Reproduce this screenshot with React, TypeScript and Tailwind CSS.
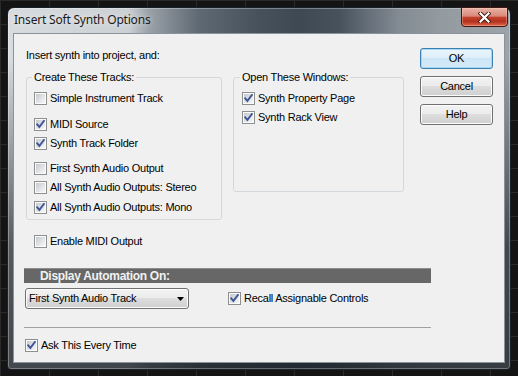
import React from "react";

function Check({ checked }: { checked?: boolean }) {
  return (
    <svg width="13" height="13" viewBox="0 0 13 13" className="block shrink-0">
      <defs>
        <linearGradient id="cbg" x1="0" y1="0" x2="1" y2="1">
          <stop offset="0" stopColor="#c6cacf" />
          <stop offset="1" stopColor="#f7f7f7" />
        </linearGradient>
      </defs>
      <rect x="0.5" y="0.5" width="12" height="12" fill="#fbfbfb" stroke="#8e8f8f" />
      <rect x="2" y="2" width="9" height="9" fill="url(#cbg)" />
      {checked && (
        <path d="M3.2 6.3 L5.4 8.9 L9.9 3" fill="none" stroke="#3f5597" strokeWidth="1.9" strokeLinecap="square" />
      )}
    </svg>
  );
}

function Row({ checked, label, className }: { checked?: boolean; label: string; className?: string }) {
  return (
    <div className={"flex h-[13px] items-center gap-[3px] " + (className ?? "")}>
      <Check checked={checked} />
      <span className="whitespace-nowrap">{label}</span>
    </div>
  );
}

function Btn({ label, primary }: { label: string; primary?: boolean }) {
  return (
    <div
      className={
        primary
          ? "flex h-[21px] w-[73px] items-center justify-center rounded-[3px] border border-[#3c7fb1] bg-[linear-gradient(to_bottom,#ecf6fc_0%,#dcedf8_50%,#cde6f6_50%,#d3eaf8_100%)] shadow-[inset_0_0_0_1px_#a6d7f3]"
          : "flex h-[21px] w-[73px] items-center justify-center rounded-[3px] border border-[#707070] bg-[linear-gradient(to_bottom,#f2f2f2_0%,#ebebeb_50%,#dddddd_50%,#cfcfcf_100%)] shadow-[inset_0_0_0_1px_#fcfcfc]"
      }
    >
      {label}
    </div>
  );
}

export default function App() {
  return (
    <div className="h-[376px] w-[518px] overflow-hidden bg-[#141414] bg-[linear-gradient(#2a2a2a_1px,transparent_1px),linear-gradient(90deg,#2a2a2a_1px,transparent_1px)] bg-[size:49px_24px] pl-[7px] pt-[7px] font-['Liberation_Sans',Arial,sans-serif] text-[11px] leading-[13px] tracking-[-0.25px] text-black">
      <div className="flex h-[363px] w-[504px] flex-col rounded-t-[7px] rounded-b-[4px] border border-[#1a2128] bg-[linear-gradient(to_bottom,rgba(28,34,40,0)_0px,rgba(28,34,40,0)_50px,rgba(28,34,40,0.7)_240px,rgba(28,34,40,0.8)_100%),linear-gradient(to_right,#d8dcdf_0%,#cbd0d4_24%,#9aa2a9_28%,#5f6973_38%,#46515c_50%,#3e4954_58%,#47525d_66%,#66707a_72%,#838b93_78%,#939ba1_86%,#9ca3a9_100%)] shadow-[inset_0_0_0_1px_rgba(255,255,255,0.3)]">
        {/* title bar */}
        <div className="flex h-[25px] items-start justify-between pl-[6px]">
          <span className="pt-[4px] font-['Noto_Sans',sans-serif] text-[12px] leading-[16px] tracking-[-0.2px] text-[#1b1b1b] [text-shadow:0_0_6px_rgba(255,255,255,0.8)]">
            Insert Soft Synth Options
          </span>
          <div className="mr-[2px] mt-[-1px] flex h-[20px] w-[47px] items-center justify-center rounded-b-[4px] border border-[#3d1710] bg-[linear-gradient(to_bottom,#e9b3a8_0%,#d98878_45%,#c2402c_52%,#b5311f_75%,#e0674b_100%)] shadow-[inset_0_0_0_1px_rgba(255,215,200,0.35)]">
            <svg width="13" height="11" viewBox="0 0 13 11">
              <path d="M2.5 1.5 L10.5 9.5 M10.5 1.5 L2.5 9.5" stroke="#3b1a14" strokeWidth="4" strokeLinecap="square" fill="none" />
              <path d="M2.5 1.5 L10.5 9.5 M10.5 1.5 L2.5 9.5" stroke="#ffffff" strokeWidth="2.2" strokeLinecap="square" fill="none" />
            </svg>
          </div>
        </div>

        {/* client area */}
        <div className="mx-[5px] flex h-[330px] flex-col border border-[#8a939b] bg-[#f0f0f0] pl-[10px] pt-[14px]">
          <div className="flex items-start">
            <div className="flex-1 pt-[1px]">
              <div className="ml-[2px] h-[13px] whitespace-nowrap">Insert synth into project, and:</div>
              <div className="ml-[2px] mt-[9px] flex items-start gap-[11px]">
                <fieldset className="w-[196px] rounded-[3px] border border-[#d3d8dc] px-[5px] pb-[5px] pt-[8px]">
                  <legend className="h-[13px] px-[2px] leading-[13px] whitespace-nowrap">Create These Tracks:</legend>
                  <Row className="ml-[2px]" label="Simple Instrument Track" />
                  <Row className="ml-[2px] mt-[13px]" checked label="MIDI Source" />
                  <Row className="ml-[2px] mt-[6px]" checked label="Synth Track Folder" />
                  <Row className="ml-[2px] mt-[12px]" label="First Synth Audio Output" />
                  <Row className="ml-[2px] mt-[6px]" label="All Synth Audio Outputs: Stereo" />
                  <Row className="ml-[2px] mt-[7px]" checked label="All Synth Audio Outputs: Mono" />
                </fieldset>
                <fieldset className="w-[171px] rounded-[3px] border border-[#d3d8dc] px-[5px] pb-[67px] pt-[8px]">
                  <legend className="ml-[1px] h-[13px] px-[2px] leading-[13px] whitespace-nowrap">Open These Windows:</legend>
                  <Row className="ml-[3px]" checked label="Synth Property Page" />
                  <Row className="ml-[3px] mt-[6px]" checked label="Synth Rack View" />
                </fieldset>
              </div>
            </div>
            <div className="mr-[11px] flex w-[73px] flex-col gap-[7px]">
              <Btn label="OK" primary />
              <Btn label="Cancel" />
              <Btn label="Help" />
            </div>
          </div>

          <Row className="ml-[10px] mt-[15px]" label="Enable MIDI Output" />

          <div className="mt-[20px] flex h-[15px] w-[407px] items-center border-t border-[#8c8c8c] bg-[#676767] pl-[16px] text-[12px] font-bold leading-[14px] tracking-[-0.3px] text-[#f2f2f2]">
            Display Automation On:
          </div>

          <div className="mt-[5px] flex h-[21px] items-center">
            <div className="ml-[1px] flex h-[21px] w-[164px] items-center justify-between rounded-[3px] border border-[#707070] bg-[linear-gradient(to_bottom,#f2f2f2_0%,#ebebeb_50%,#dddddd_50%,#cfcfcf_100%)] pl-[3px] pr-[4px] shadow-[inset_0_0_0_1px_#fcfcfc]">
              <span className="whitespace-nowrap">First Synth Audio Track</span>
              <svg width="7" height="4" viewBox="0 0 7 4" className="block">
                <path d="M0 0 L7 0 L3.5 4 Z" fill="#000" />
              </svg>
            </div>
            <Row className="ml-[39px]" checked label="Recall Assignable Controls" />
          </div>

          <div className="mt-[18px] h-px w-[407px] bg-[#a0a0a0]" />

          <Row className="ml-[1px] mt-[11px]" checked label="Ask This Every Time" />
        </div>
      </div>
    </div>
  );
}
